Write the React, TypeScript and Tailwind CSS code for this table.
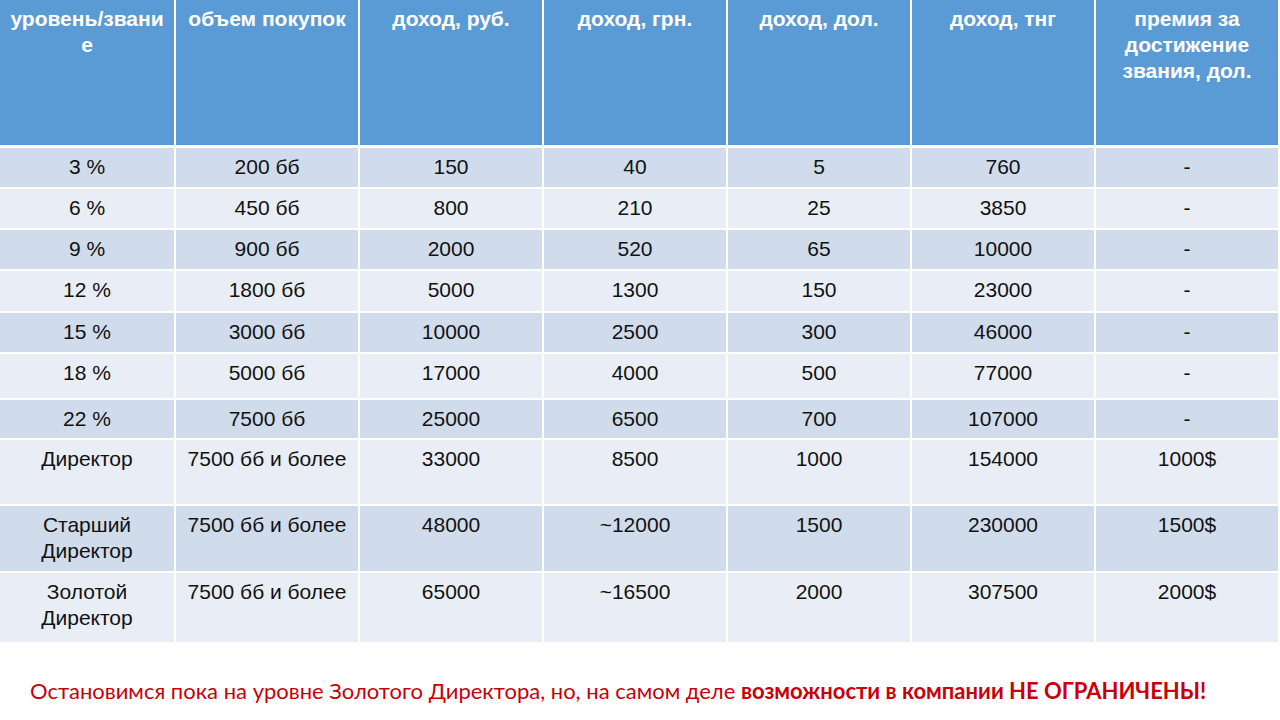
const HEADERS = [
  "уровень/звание",
  "объем покупок",
  "доход, руб.",
  "доход, грн.",
  "доход, дол.",
  "доход, тнг",
  "премия за достижение звания, дол.",
];

const ROWS: { cells: string[]; h: string }[] = [
  { cells: ["3 %", "200 бб", "150", "40", "5", "760", "-"], h: "h-[39px]" },
  { cells: ["6 %", "450 бб", "800", "210", "25", "3850", "-"], h: "h-[39px]" },
  { cells: ["9 %", "900 бб", "2000", "520", "65", "10000", "-"], h: "h-[39px]" },
  { cells: ["12 %", "1800 бб", "5000", "1300", "150", "23000", "-"], h: "h-[40px]" },
  { cells: ["15 %", "3000 бб", "10000", "2500", "300", "46000", "-"], h: "h-[39px]" },
  { cells: ["18 %", "5000 бб", "17000", "4000", "500", "77000", "-"], h: "h-[44px]" },
  { cells: ["22 %", "7500 бб", "25000", "6500", "700", "107000", "-"], h: "h-[38px]" },
  { cells: ["Директор", "7500 бб и более", "33000", "8500", "1000", "154000", "1000$"], h: "h-[64px]" },
  { cells: ["Старший Директор", "7500 бб и более", "48000", "~12000", "1500", "230000", "1500$"], h: "h-[65px]" },
  { cells: ["Золотой Директор", "7500 бб и более", "65000", "~16500", "2000", "307500", "2000$"], h: "h-[69px]" },
];

const COLS = "grid grid-cols-[174px_182px_182px_182px_182px_182px_182px] gap-x-[2px]";

export default function App() {
  return (
    <div className="w-[1280px] h-[720px] bg-white overflow-hidden font-['Liberation_Sans',Arial,sans-serif]">
      <div className={`${COLS} h-[145px]`}>
        {HEADERS.map((h, i) => (
          <div
            key={h}
            className={`bg-[#5b9bd5] text-white font-bold text-[21px] leading-[26px] text-center px-[6px] pt-[6px] ${i === 0 ? "break-all" : ""}`}
          >
            {h}
          </div>
        ))}
      </div>
      <div className="flex flex-col gap-y-[2px] pt-[3px]">
        {ROWS.map((row, i) => (
          <div key={i} className={`${COLS} ${row.h}`}>
            {row.cells.map((c, j) => (
              <div
                key={j}
                className={`${i % 2 === 0 ? "bg-[#d0dcec]" : "bg-[#e9eef6]"} text-[#111] text-[21px] leading-[26px] text-center px-[6px] pt-[6px]`}
              >
                {c}
              </div>
            ))}
          </div>
        ))}
      </div>
      <div className="pt-[36px] pl-[30px] text-[#c8000a] text-[22px] leading-[26px] font-['Lato',sans-serif]">
        Остановимся пока на уровне Золотого Директора, но, на самом деле{" "}
        <span className="font-bold">возможности в компании НЕ ОГРАНИЧЕНЫ!</span>
      </div>
    </div>
  );
}
